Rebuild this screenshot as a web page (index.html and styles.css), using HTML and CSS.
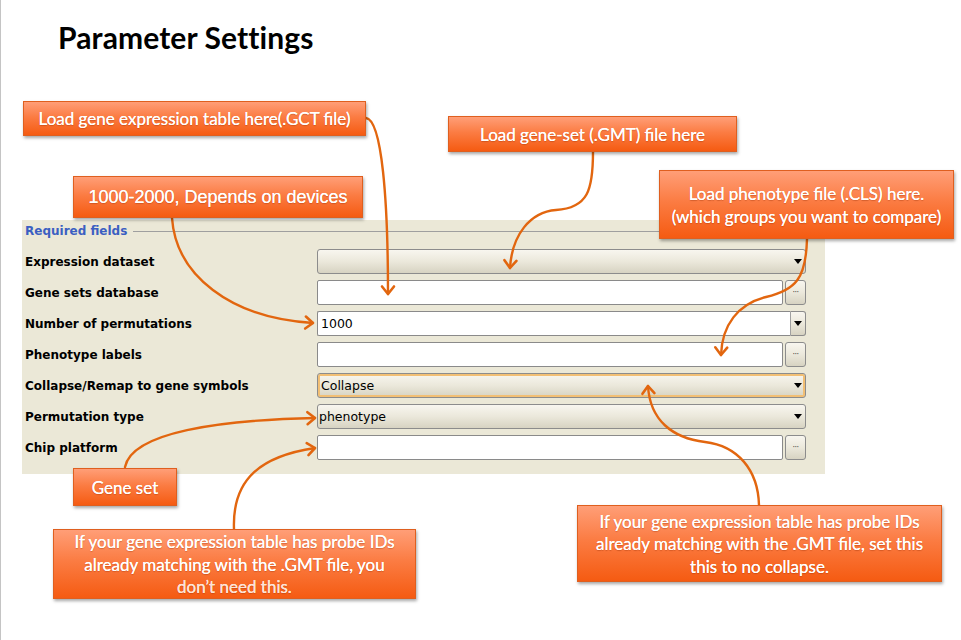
FILE: index.html
```html
<!DOCTYPE html>
<html lang="en">
<head>
<meta charset="utf-8">
<title>Parameter Settings</title>
<link rel="stylesheet" href="styles.css">
</head>
<body>
<div class="slide">
  <h1 class="title">Parameter Settings</h1>

  <section class="panel">
    <div class="legend"><span class="legend-text">Required fields</span><i class="rule"></i></div>
    <div class="rows">
      <div class="row">
        <label class="lbl">Expression dataset</label>
        <div class="combo"><span class="val"></span><span class="arrow"></span></div>
      </div>
      <div class="row">
        <label class="lbl">Gene sets database</label>
        <div class="filefield"><div class="input"></div><span class="browse">···</span></div>
      </div>
      <div class="row">
        <label class="lbl">Number of permutations</label>
        <div class="editcombo"><div class="input">1000</div><span class="dropbtn"><span class="arrow"></span></span></div>
      </div>
      <div class="row">
        <label class="lbl">Phenotype labels</label>
        <div class="filefield"><div class="input"></div><span class="browse">···</span></div>
      </div>
      <div class="row">
        <label class="lbl">Collapse/Remap to gene symbols</label>
        <div class="combo focus"><span class="val">Collapse</span><span class="arrow"></span></div>
      </div>
      <div class="row">
        <label class="lbl">Permutation type</label>
        <div class="combo flush"><span class="val">phenotype</span><span class="arrow"></span></div>
      </div>
      <div class="row">
        <label class="lbl">Chip platform</label>
        <div class="filefield"><div class="input"></div><span class="browse">···</span></div>
      </div>
    </div>
  </section>

  <svg class="arrows" width="961" height="640" viewBox="0 0 961 640" aria-hidden="true">
    <defs>
      <marker id="ah" markerUnits="userSpaceOnUse" markerWidth="20" markerHeight="20" refX="10" refY="10" orient="auto" viewBox="0 0 20 20">
        <path d="M2.5,4 L10,10 L2.5,16" fill="none" stroke="#e2660f" stroke-width="2.6" stroke-linecap="round" stroke-linejoin="round"/>
      </marker>
    </defs>
    <g fill="none" stroke="#e2660f" stroke-width="2.4" stroke-linecap="round">
      <path d="M366,118 C382,120 388,200 388,294" marker-end="url(#ah)"/>
      <path d="M593,152 C593,190 588,208 556,210 C530,212 512,235 510,268" marker-end="url(#ah)"/>
      <path d="M807,239 C806,278 796,290 766,297 C738,304 722,325 721,355" marker-end="url(#ah)"/>
      <path d="M172,218 C176,275 230,318 313,323" marker-end="url(#ah)"/>
      <path d="M125,467 C132,432 220,420 315,418" marker-end="url(#ah)"/>
      <path d="M234,529 C232,478 262,456 315,448" marker-end="url(#ah)"/>
      <path d="M759,505 C758,470 738,446 705,442 C672,438 650,420 648,386" marker-end="url(#ah)"/>
    </g>
  </svg>

  <div class="callout c-gct"><p class="txt">Load gene expression table here(.GCT file)</p></div>
  <div class="callout c-perm"><p class="txt">1000-2000, Depends on devices</p></div>
  <div class="callout c-gmt"><p class="txt">Load gene-set (.GMT) file here</p></div>
  <div class="callout c-cls"><p class="txt">Load phenotype file (.CLS) here.<br>(which groups you want to compare)</p></div>
  <div class="callout c-geneset"><p class="txt">Gene set</p></div>
  <div class="callout c-chip"><p class="txt">If your gene expression table has probe IDs<br>already matching with the .GMT file, you<br><span class="soft">don’t need this.</span></p></div>
  <div class="callout c-collapse"><p class="txt">If your gene expression table has probe IDs<br>already matching with the .GMT file, set this<br>this to no collapse.</p></div>
</div>
</body>
</html>
```

FILE: styles.css
```css
html, body {
  margin: 0;
  padding: 0;
  background: #ffffff;
}

.slide {
  position: relative;
  width: 961px;
  height: 640px;
  overflow: hidden;
  background: #ffffff;
  box-shadow: inset 1px 0 0 #c4c4c4;
}

.title {
  margin: 0;
  padding: 19px 0 0 58px;
  font: 700 30px/36px Lato, "Open Sans", sans-serif;
  color: #000;
  letter-spacing: 0.1px;
}

/* ---------- form panel ---------- */
.panel {
  margin: 165px 0 0 22px;
  width: 803px;
  height: 254px;
  box-sizing: border-box;
  background: #ebe8d7;
  padding: 4px 19px 0 3px;
  font-family: "DejaVu Sans", sans-serif;
}

.legend {
  display: flex;
  align-items: center;
  gap: 6px;
  height: 14px;
}

.legend-text {
  font-size: 12px;
  font-weight: 700;
  color: #3b5fc2;
  white-space: nowrap;
}

.rule {
  flex: 1;
  border-top: 1px solid #9f9f9f;
  height: 0;
}

.rows {
  display: flex;
  flex-direction: column;
  gap: 6px;
  margin-top: 11px;
}

.row {
  display: grid;
  grid-template-columns: 292px 1fr;
  align-items: center;
  height: 25px;
}

.lbl {
  font-size: 12px;
  font-weight: 700;
  color: #000;
  white-space: nowrap;
}

.combo,
.filefield,
.editcombo {
  height: 25px;
  box-sizing: border-box;
  display: flex;
  font-size: 12.5px;
  color: #000;
}

.combo {
  align-items: center;
  border: 1px solid #8c8c8c;
  border-radius: 3px;
  padding: 0 0 0 3px;
  background: linear-gradient(#f8f6ef, #ebe8db 50%, #d7d3c2);
}

.combo.flush {
  padding-left: 1px;
}

.combo.focus {
  box-shadow: inset 0 0 0 2px #f2bf74;
}

.val {
  white-space: nowrap;
}

.arrow {
  width: 0;
  height: 0;
  border-left: 4px solid transparent;
  border-right: 4px solid transparent;
  border-top: 5px solid #000;
}

.combo .arrow {
  margin-left: auto;
  margin-right: 3px;
}

.filefield {
  gap: 2px;
}

.input {
  flex: 1;
  display: flex;
  align-items: center;
  box-sizing: border-box;
  background: #fff;
  border: 1px solid #8a8a8a;
  border-radius: 2px;
  padding-left: 3px;
}

.browse {
  width: 21px;
  box-sizing: border-box;
  border: 1px solid #8c8c8c;
  border-radius: 3px;
  background: linear-gradient(#f8f6ef, #ebe8db 50%, #d7d3c2);
  display: flex;
  align-items: center;
  justify-content: center;
  font-size: 8px;
  color: #444;
  letter-spacing: -0.5px;
}

.dropbtn {
  width: 16px;
  box-sizing: border-box;
  border: 1px solid #8c8c8c;
  border-left-color: #a0a0a0;
  border-radius: 0 3px 3px 0;
  background: linear-gradient(#f8f6ef, #ebe8db 50%, #d7d3c2);
  display: flex;
  align-items: center;
  justify-content: center;
}

.editcombo .input {
  border-right: none;
  border-radius: 2px 0 0 2px;
}

/* ---------- annotation overlay ---------- */
.arrows {
  position: absolute;
  left: 0;
  top: 0;
  pointer-events: none;
}

.callout {
  position: absolute;
  box-sizing: border-box;
  display: flex;
  align-items: center;
  justify-content: center;
  padding-top: 2px;
  text-align: center;
  color: #fff;
  font: 400 17px/22.5px Lato, "Open Sans", sans-serif;
  background: linear-gradient(#ff9e77 0%, #fb7c43 45%, #f55b12 100%);
  border: 1px solid #df5f1f;
  box-shadow: 1px 2px 3px rgba(0, 0, 0, 0.35);
  text-shadow: 0 0 0.4px #fff, 0 1px 1px rgba(140, 40, 0, 0.35);
}

.txt {
  margin: 0;
  white-space: nowrap;
}

.soft {
  color: #fde2d4;
}

.c-gct {
  left: 23px;
  top: 101px;
  width: 343px;
  height: 35px;
}

.c-perm {
  left: 73px;
  top: 176px;
  width: 290px;
  height: 42px;
  padding-top: 0;
  font-family: "Liberation Sans", Arial, sans-serif;
  font-size: 18px;
}

.c-gmt {
  left: 448px;
  top: 116px;
  width: 289px;
  height: 36px;
}

.c-cls {
  left: 659px;
  top: 170px;
  width: 295px;
  height: 69px;
}

.c-geneset {
  left: 73px;
  top: 468px;
  width: 104px;
  height: 38px;
}

.c-chip {
  left: 53px;
  top: 529px;
  width: 363px;
  height: 70px;
}

.c-collapse {
  left: 577px;
  top: 505px;
  width: 365px;
  height: 77px;
}
```
